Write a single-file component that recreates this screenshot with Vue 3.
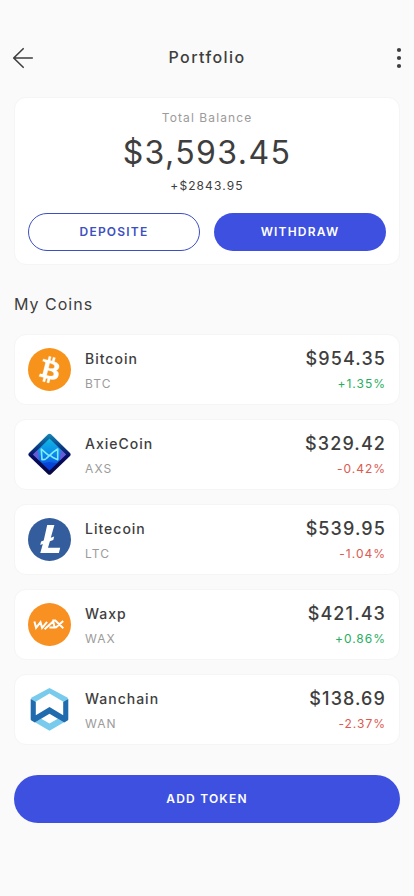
<script setup>
const coins = [
  { id: 'btc', name: 'Bitcoin', symbol: 'BTC', price: '$954.35', change: '+1.35%' },
  { id: 'axs', name: 'AxieCoin', symbol: 'AXS', price: '$329.42', change: '-0.42%' },
  { id: 'ltc', name: 'Litecoin', symbol: 'LTC', price: '$539.95', change: '-1.04%' },
  { id: 'wax', name: 'Waxp', symbol: 'WAX', price: '$421.43', change: '+0.86%' },
  { id: 'wan', name: 'Wanchain', symbol: 'WAN', price: '$138.69', change: '-2.37%' }
]
</script>

<template>
  <main class="screen">
    <header class="topbar">
      <button class="icon-btn" aria-label="Back">
        <svg width="22" height="22" viewBox="0 0 22 22" fill="none" stroke="#3e3e3e" stroke-width="1.6" stroke-linecap="round" stroke-linejoin="round">
          <path d="M11.2 1.7 1.7 11l9.5 9.3M2 11H20.3" />
        </svg>
      </button>
      <h1 class="title">Portfolio</h1>
      <button class="icon-btn" aria-label="More">
        <svg width="6" height="22" viewBox="0 0 6 22" fill="#3e3e3e">
          <circle cx="3" cy="3" r="2.1" /><circle cx="3" cy="11" r="2.1" /><circle cx="3" cy="19" r="2.1" />
        </svg>
      </button>
    </header>

    <section class="card balance">
      <p class="label">Total Balance</p>
      <p class="amount">$3,593.45</p>
      <p class="delta">+$2843.95</p>
      <div class="actions">
        <button class="btn outline">DEPOSITE</button>
        <button class="btn solid">WITHDRAW</button>
      </div>
    </section>

    <h2 class="section-title">My Coins</h2>

    <ul class="coins">
      <li v-for="c in coins" :key="c.id" class="card coin">
        <svg class="logo" viewBox="0 0 43 43">
          <template v-if="c.id === 'btc'">
            <circle cx="21.5" cy="21.5" r="21.5" fill="#f7931a" />
            <path transform="translate(0 .2) scale(1.34)" fill="#fff" stroke="#fff" stroke-width=".2" fill-rule="evenodd" d="M23.189 14.02c.314-2.096-1.283-3.223-3.465-3.975l.708-2.84-1.728-.43-.69 2.765c-.454-.114-.92-.22-1.385-.326l.695-2.783L15.596 6l-.708 2.839c-.376-.086-.746-.17-1.104-.26l.002-.009-2.384-.595-.46 1.846s1.283.294 1.256.312c.7.175.826.638.805 1.006l-.806 3.235c.048.012.11.03.18.057l-.183-.045-1.13 4.532c-.086.212-.303.531-.793.41.018.025-1.256-.313-1.256-.313l-.858 1.978 2.25.561c.418.105.828.215 1.231.318l-.715 2.872 1.727.43.708-2.84c.472.127.93.245 1.378.357l-.706 2.828 1.728.43.715-2.866c2.948.558 5.164.333 6.097-2.333.752-2.146-.037-3.385-1.588-4.192 1.13-.26 1.98-1.003 2.207-2.538zm-3.95 5.538c-.533 2.147-4.148.986-5.32.695l.95-3.805c1.172.293 4.929.872 4.37 3.11zm.535-5.569c-.487 1.953-3.495.96-4.47.717l.86-3.45c.975.243 4.118.696 3.61 2.733z" />
          </template>
          <template v-else-if="c.id === 'axs'">
            <defs>
              <linearGradient id="axs-rim" x1="0" y1="0" x2="0" y2="1">
                <stop offset="0" stop-color="#1587b4" /><stop offset=".3" stop-color="#0b4288" /><stop offset=".55" stop-color="#080b62" /><stop offset="1" stop-color="#08083f" />
              </linearGradient>
              <linearGradient id="axs-core" x1="0" y1="0" x2="0" y2="1">
                <stop offset="0" stop-color="#10b6e2" /><stop offset=".5" stop-color="#0b87eb" /><stop offset="1" stop-color="#063ddc" />
              </linearGradient>
            </defs>
            <path d="M20 1.3q1.5-1 3 0l19 18.8q1.3 1.4 0 2.8L23 41.2q-1.5 1-3 0L1 22.9q-1.3-1.4 0-2.8z" fill="url(#axs-rim)" />
            <path d="M21.5 5.5 38 21.5l-16.5 16L5 21.5z" fill="url(#axs-core)" />
            <path d="M10 16.7 5 21.5l6.2 6zM33 16.7l5 4.8-6.2 6z" fill="#6959d4" />
            <path d="M21.5 29 29 30.3l-7.5 7.2-7.5-7.2z" fill="#0637cf" opacity=".6" />
            <path d="M13.3 16 14 26.8l3.2-.4M13.3 16l4.3 3.9 3 2.4M18.4 25.4l6.8-6.2M29.7 16l-4.5 3.2M22.5 22.6l3 2.2 4.2 1.9V16" fill="none" stroke="#80edfb" stroke-width="1.6" stroke-linecap="round" stroke-linejoin="round" />
          </template>
          <template v-else-if="c.id === 'ltc'">
            <circle cx="21.5" cy="21.5" r="21.5" fill="#345d9d" />
            <path d="M19.2 7h7.2l-3.6 12.8 3.4-1.3-.9 3.4-3.4 1.3-1.9 6.6h12.2L30.9 35H12.3l2.5-9.1-2.6 1 .9-3.4 2.6-1z" fill="#fff" />
          </template>
          <template v-else-if="c.id === 'wax'">
            <circle cx="21.5" cy="21.5" r="21.5" fill="#f89022" />
            <path d="M6.4 18.6l1.7 6.2 4.4-5.6 1.6 5.6 5-6M16.6 26.2l8.6-7.8 1.4 6.2h-5.2M24.3 17.6h3l8 7.6M35.2 18l-7.6 6.8" fill="none" stroke="#fff" stroke-width="2" stroke-linejoin="miter" />
          </template>
          <template v-else>
            <path d="M3.2 12V9.8L21.5 0l18.3 9.8V12l-3.6 2.2-14.7-8.6-14.7 8.6zM7 34.2l6.2-3.5 8.3 4.8 8.3-4.8 6.2 3.5-14.5 8.5z" fill="#78cbec" />
            <path d="M2.7 11 7.8 14v13.2L21.5 19l13.7 8.2V14l5.1-3v20.2q0 .8-.7 1.2l-3.4 2L21.5 25.7 6.8 34.4l-3.4-2q-.7-.4-.7-1.2z" fill="#1f6bad" />
          </template>
        </svg>
        <div class="identity">
          <span class="name">{{ c.name }}</span>
          <span class="symbol">{{ c.symbol }}</span>
        </div>
        <div class="value">
          <span class="price">{{ c.price }}</span>
          <span class="change" :class="{ down: c.change.startsWith('-') }">{{ c.change }}</span>
        </div>
      </li>
    </ul>

    <button class="btn solid add">ADD TOKEN</button>
  </main>
</template>

<style>
body {
  background: #fafafa;
}
</style>

<style scoped>
.screen {
  box-sizing: border-box;
  min-height: 896px;
  padding: 36px 14px 73px;
  display: flex;
  flex-direction: column;
  background: #fafafa;
  color: #3e3e3e;
  font-family: Inter, sans-serif;
  letter-spacing: 1.1px;
}
h1, h2, p, ul {
  margin: 0;
  padding: 0;
  font-weight: 400;
}
button {
  font: inherit;
  letter-spacing: inherit;
  color: inherit;
  background: none;
  border: 0;
  padding: 0;
}
.topbar {
  height: 44px;
  margin: 0 -2px 17px;
  display: flex;
  align-items: center;
  justify-content: space-between;
}
.icon-btn {
  width: 22px;
  height: 22px;
  display: flex;
}
.icon-btn:last-child {
  justify-content: flex-end;
}
.title {
  font-size: 16px;
  line-height: 22px;
  font-weight: 500;
  letter-spacing: 1.4px;
  margin-top: -2px;
}
.card {
  box-sizing: border-box;
  background: #fff;
  border: 1px solid #f5f5f5;
  border-radius: 12px;
}
.balance {
  height: 168px;
  padding: 12px 13px 13px;
  display: flex;
  flex-direction: column;
  text-align: center;
}
.label {
  font-size: 12px;
  line-height: 16px;
  color: #9b9b9b;
}
.amount {
  font-size: 32px;
  line-height: 40px;
  margin-top: 7px;
  letter-spacing: 1.4px;
}
.delta {
  font-size: 12px;
  line-height: 16px;
  margin-top: 5px;
}
.actions {
  display: grid;
  grid-template-columns: 1fr 1fr;
  gap: 14px;
  margin-top: auto;
}
.btn {
  height: 38px;
  border-radius: 24px;
  font-size: 12px;
  font-weight: 600;
  letter-spacing: 1.2px;
  padding-bottom: 2px;
}
.outline {
  border: 1px solid #3d50c3;
  color: #3d50c3;
}
.solid {
  background: #3d50e0;
  color: #fff;
}
.section-title {
  font-size: 16px;
  line-height: 22px;
  letter-spacing: 1px;
  margin: 28px 0 19px;
}
.coins {
  list-style: none;
  display: flex;
  flex-direction: column;
  gap: 14px;
}
.coin {
  height: 71px;
  padding: 0 13px;
  display: flex;
  align-items: center;
}
.logo {
  width: 43px;
  height: 43px;
  margin-right: 14px;
}
.identity,
.value {
  display: flex;
  flex-direction: column;
  gap: 4px;
  padding-top: 3px;
}
.value {
  margin-left: auto;
  align-items: flex-end;
}
.name {
  font-size: 14px;
  line-height: 22px;
  font-weight: 500;
  letter-spacing: 1px;
}
.symbol,
.change {
  font-size: 12px;
  line-height: 20px;
}
.symbol {
  color: #9b9b9b;
}
.price {
  font-size: 18px;
  line-height: 22px;
  font-weight: 500;
  letter-spacing: 1.1px;
}
.change {
  color: #27ae60;
  letter-spacing: 1px;
}
.change.down {
  color: #dc5a50;
}
.add {
  height: 48px;
  margin-top: 30px;
}
</style>
